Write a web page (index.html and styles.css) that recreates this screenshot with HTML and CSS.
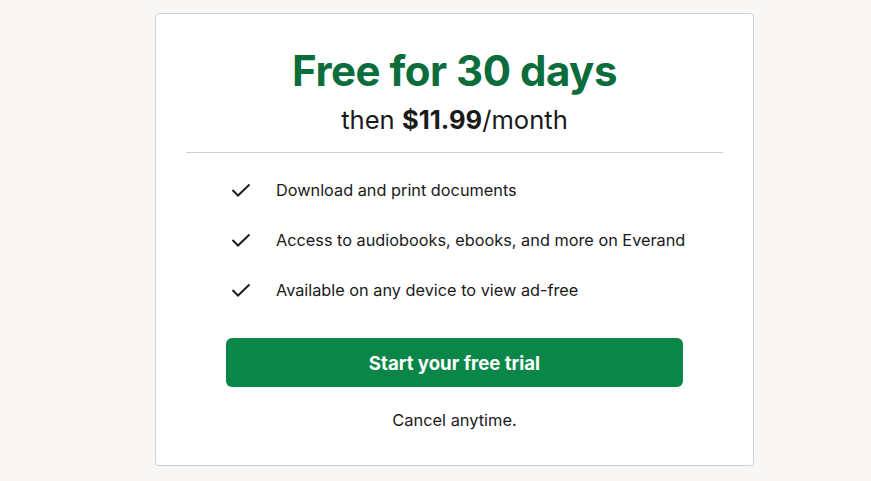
FILE: index.html
```html
<!DOCTYPE html>
<html>
  <head>
    <link rel="stylesheet" href="styles.css">
  </head>
  <body>
    <div class="page">
      <div class="card">
        <div class="title">Free for 30 days</div>
        <div class="price">then <b>$11.99</b>/month</div>
        <hr class="divider" />
        <ul class="perks">
          <li>
            <svg class="check" viewBox="0 0 20 14" width="20" height="14">
              <path d="M1.5 7 L7 12.5 L18.5 1.5" fill="none" stroke="#1e1e1e" stroke-width="2" />
            </svg>
            Download and print documents
          </li>
          <li>
            <svg class="check" viewBox="0 0 20 14" width="20" height="14">
              <path d="M1.5 7 L7 12.5 L18.5 1.5" fill="none" stroke="#1e1e1e" stroke-width="2" />
            </svg>
            Access to audiobooks, ebooks, and more on Everand
          </li>
          <li>
            <svg class="check" viewBox="0 0 20 14" width="20" height="14">
              <path d="M1.5 7 L7 12.5 L18.5 1.5" fill="none" stroke="#1e1e1e" stroke-width="2" />
            </svg>
            Available on any device to view ad-free
          </li>
        </ul>
        <button class="cta">Start your free trial</button>
        <div class="cancel">Cancel anytime.</div>
      </div>
    </div>
  </body>
</html>
```

FILE: styles.css
```css
body {
  margin: 0;
  background-color: #f8f7f5;
  font-family: Inter, "Liberation Sans", sans-serif;
  color: #1a1a1a;
}

.page {
  padding: 13px 0 0 155px;
}

.card {
  width: 599px;
  height: 453px;
  background-color: white;
  border: 1px solid #cfcfd8;
  border-radius: 4px;
  padding: 0 30px;
  box-sizing: border-box;
  display: flex;
  flex-direction: column;
  align-items: center;
}

.title {
  margin-top: 29px;
  font-size: 42px;
  font-weight: 700;
  line-height: 56px;
  color: #0b6c3c;
  letter-spacing: -0.5px;
}

.price {
  font-size: 25.6px;
  line-height: 34px;
  margin-top: 4px;
}

.price b {
  font-weight: 700;
}

.divider {
  align-self: stretch;
  border: none;
  border-top: 1px solid #cfcfd8;
  margin: 15px 0 0 0;
}

.perks {
  list-style: none;
  margin: 24px 0 0 0;
  padding: 0;
  align-self: stretch;
  padding-left: 45px;
}

.perks li {
  display: flex;
  align-items: center;
  gap: 25px;
  font-size: 16.3px;
  line-height: 26px;
  margin-bottom: 24px;
}

.check {
  flex: none;
}

.cta {
  align-self: stretch;
  margin: 11px 40px 0 40px;
  height: 49px;
  border: none;
  border-radius: 6px;
  background-color: #0a8649;
  color: white;
  font-family: inherit;
  font-size: 18.6px;
  font-weight: 700;
}

.cancel {
  margin-top: 23px;
  font-size: 16.4px;
}
```
